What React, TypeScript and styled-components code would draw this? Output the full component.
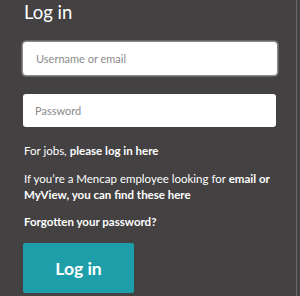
import React from "react";
import styled, { createGlobalStyle } from "styled-components";

const Global = createGlobalStyle`
  html, body { margin: 0; padding: 0; background: #434141; }
  body { font-family: Lato, "Open Sans", sans-serif; }
`;

const Page = styled.div`
  width: 300px;
  height: 296px;
  box-sizing: border-box;
  background: #434141;
  display: flex;
  overflow: hidden;
`;

const Panel = styled.div`
  flex: 1;
  padding: 0 0 0 24px;
  display: flex;
  flex-direction: column;
`;

const Edge = styled.div`
  width: 1px;
  margin-right: 3px;
  background: #6a6868;
`;

const Title = styled.h1`
  margin: 0;
  font-size: 18.5px;
  font-weight: 400;
  color: #ffffff;
  line-height: 24px;
`;

const Input = styled.input<{ $focused?: boolean }>`
  box-sizing: border-box;
  width: ${(p) => (p.$focused ? 254 : 253)}px;
  height: 33px;
  margin-left: -1px;
  border-radius: 3px;
  border: ${(p) => (p.$focused ? "1px solid #ffffff" : "none")};
  box-shadow: ${(p) => (p.$focused ? "0 0 0 1.5px #8a8888" : "none")};
  background: #ffffff;
  padding: 0 12px;
  font-family: Lato, sans-serif;
  font-size: 11px;
  color: #333;
  outline: none;
  &::placeholder { color: #8a8a8a; }
`;

const Text = styled.p<{ $lh?: number }>`
  margin: 0;
  font-size: 11.5px;
  line-height: ${(p) => p.$lh ?? 15}px;
  color: #ffffff;
  b { font-weight: 700; }
`;

const Button = styled.button`
  width: 111px;
  height: 50px;
  margin-left: -1px;
  border: none;
  border-radius: 2px;
  background: #1d9ea9;
  color: #ffffff;
  font-family: Lato, sans-serif;
  font-size: 17.5px;
  font-weight: 700;
  cursor: pointer;
`;

const Spacer = styled.div<{ $h: number }>`
  height: ${(p) => p.$h}px;
  flex: none;
`;

export default function App() {
  return (
    <Page>
      <Global />
      <Panel>
        <Title>Log in</Title>
        <Spacer $h={18} />
        <Input $focused placeholder="Username or email" />
        <Spacer $h={19} />
        <Input placeholder="Password" type="password" />
        <Spacer $h={16} />
        <Text>
          For jobs, <b>please log in here</b>
        </Text>
        <Spacer $h={12.5} />
        <Text $lh={16}>
          If you’re a Mencap employee looking for <b>email or</b>
          <br />
          <b>MyView, you can find these here</b>
        </Text>
        <Spacer $h={11.5} />
        <Text>
          <b>Forgotten your password?</b>
        </Text>
        <Spacer $h={14} />
        <Button>Log in</Button>
      </Panel>
      <Edge />
    </Page>
  );
}
